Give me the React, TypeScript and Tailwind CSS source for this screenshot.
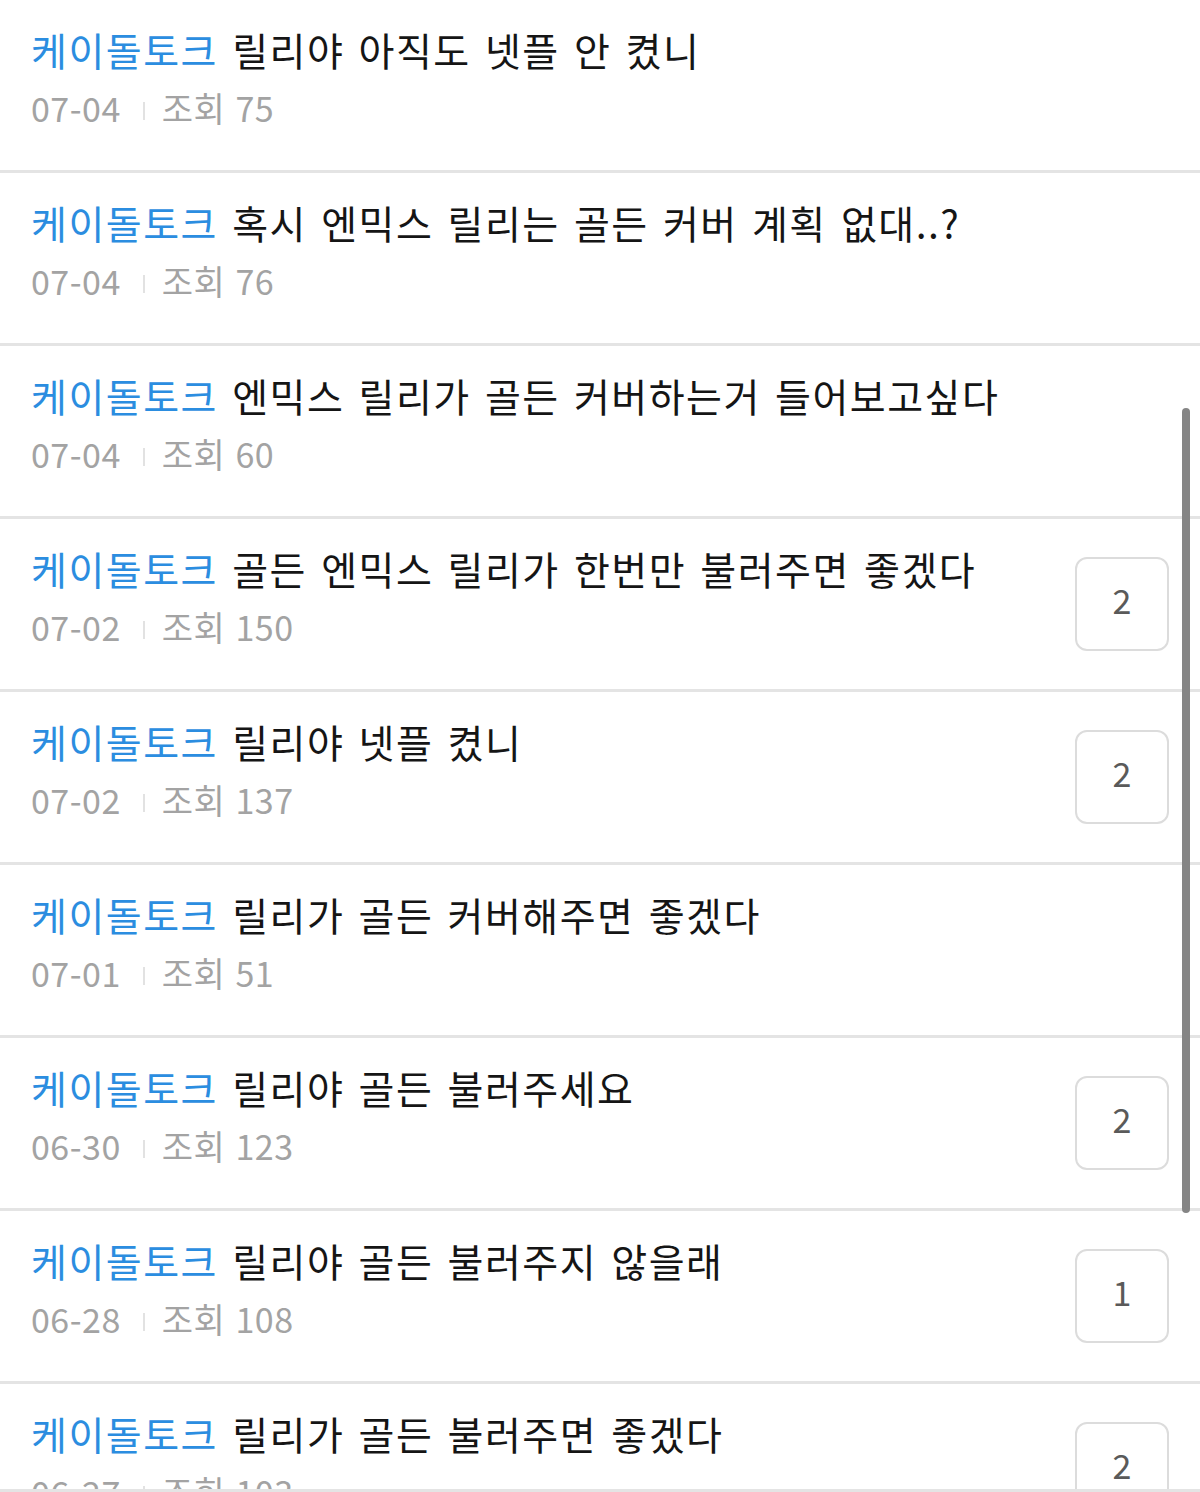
import React from "react";

type Post = {
  title: string;
  date: string;
  views: number;
  comments?: number;
};

const posts: Post[] = [
  { title: "릴리야 아직도 넷플 안 켰니", date: "07-04", views: 75 },
  { title: "혹시 엔믹스 릴리는 골든 커버 계획 없대..?", date: "07-04", views: 76 },
  { title: "엔믹스 릴리가 골든 커버하는거 들어보고싶다", date: "07-04", views: 60 },
  { title: "골든 엔믹스 릴리가 한번만 불러주면 좋겠다", date: "07-02", views: 150, comments: 2 },
  { title: "릴리야 넷플 켰니", date: "07-02", views: 137, comments: 2 },
  { title: "릴리가 골든 커버해주면 좋겠다", date: "07-01", views: 51 },
  { title: "릴리야 골든 불러주세요", date: "06-30", views: 123, comments: 2 },
  { title: "릴리야 골든 불러주지 않을래", date: "06-28", views: 108, comments: 1 },
  { title: "릴리가 골든 불러주면 좋겠다", date: "06-27", views: 103, comments: 2 },
];

const Row = ({ post }: { post: Post }) => (
  <li className="flex h-[173px] shrink-0 items-center border-b-[3px] border-[#e4e4e4] px-[31px]">
    <div className="flex flex-1 flex-col self-start pt-[27px]">
      <p className="whitespace-nowrap text-[39px] leading-[44px] tracking-[1.5px] text-[#151515] [word-spacing:4px]">
        <span className="text-[#2b8de0]">케이돌토크</span> {post.title}
      </p>
      <div className="mt-[17px] flex items-center text-[34px] leading-[40px] tracking-[0.5px] text-[#a3a3a3]">
        <span>{post.date}</span>
        <span className="ml-[22px] mr-[17px] mt-[6px] h-[18px] w-[2px] bg-[#e2e2e2]" />
        <span className="[word-spacing:2px]">조회 {post.views}</span>
      </div>
    </div>
    {post.comments !== undefined && (
      <div className="flex h-[94px] w-[94px] items-center justify-center rounded-[12px] border-2 border-[#dcdcdc] pb-[10px] text-[34px] text-[#5a5a5a]">
        {post.comments}
      </div>
    )}
  </li>
);

export default function App() {
  return (
    <div
      className="relative h-[1492px] w-[1200px] overflow-hidden bg-white"
      style={{ fontFamily: '"Noto Sans CJK KR", "Noto Sans", sans-serif' }}
    >
      <ul className="flex flex-col">
        {posts.map((p, i) => (
          <Row key={i} post={p} />
        ))}
      </ul>
      {/* scrollbar thumb */}
      <div className="absolute left-[1182px] top-[408px] h-[805px] w-[8px] rounded-full bg-[#858585]" />
      <div className="absolute bottom-0 left-0 h-[3px] w-full bg-[#e4e4e4]" />
    </div>
  );
}
